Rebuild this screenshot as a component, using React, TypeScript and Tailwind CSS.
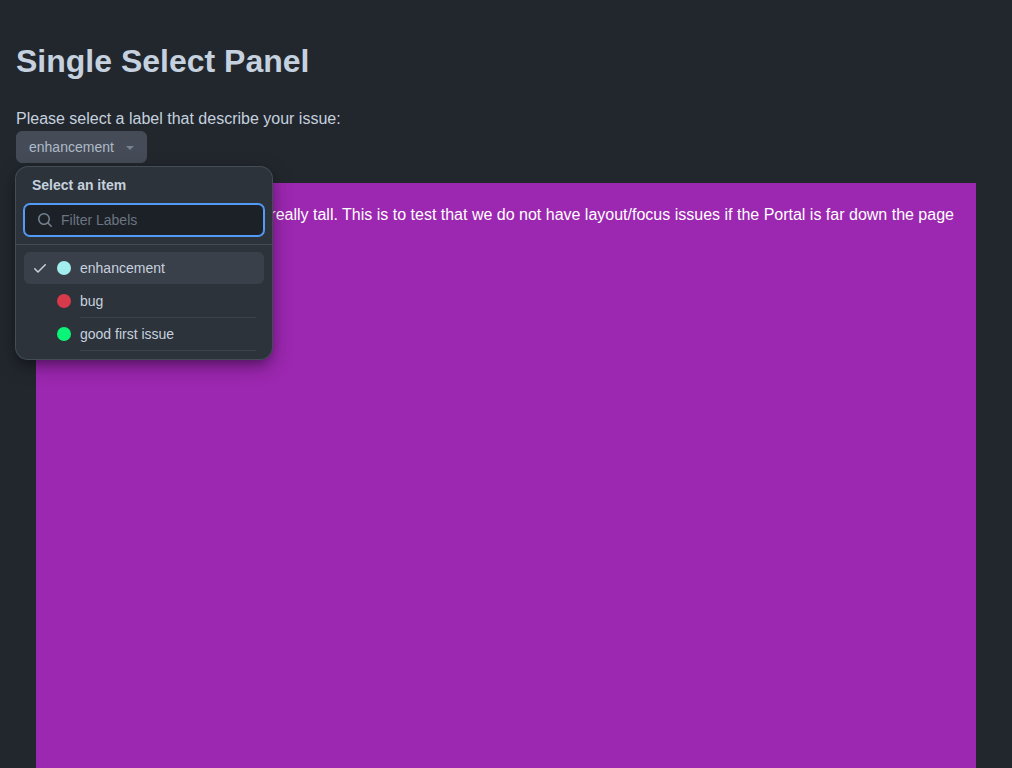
import { useState } from "react";
import { clsx } from "clsx";

type Label = { text: string; dot: string };

const labels: Label[] = [
  { text: "enhancement", dot: "bg-[#a2eeef]" },
  { text: "bug", dot: "bg-[#d73a4a]" },
  { text: "good first issue", dot: "bg-[#0cf478]" },
];

function CheckIcon() {
  return (
    <svg viewBox="0 0 16 16" className="size-4" fill="currentColor" aria-hidden="true">
      <path d="M13.78 4.22a.75.75 0 0 1 0 1.06l-7.25 7.25a.75.75 0 0 1-1.06 0L2.22 9.28a.751.751 0 0 1 .018-1.042.751.751 0 0 1 1.042-.018L6 10.94l6.72-6.72a.75.75 0 0 1 1.06 0Z" />
    </svg>
  );
}

function SearchIcon() {
  return (
    <svg viewBox="0 0 16 16" className="size-4 shrink-0" fill="currentColor" aria-hidden="true">
      <path d="M10.68 11.74a6 6 0 0 1-7.922-8.982 6 6 0 0 1 8.982 7.922l3.04 3.04a.749.749 0 0 1-.326 1.275.749.749 0 0 1-.734-.215ZM11.5 7a4.499 4.499 0 1 0-8.997 0A4.499 4.499 0 0 0 11.5 7Z" />
    </svg>
  );
}

function TriangleDownIcon() {
  return (
    <svg viewBox="0 0 16 16" className="size-4" fill="currentColor" aria-hidden="true">
      <path d="m4.427 7.427 3.396 3.396a.25.25 0 0 0 .354 0l3.396-3.396A.25.25 0 0 0 11.396 7H4.604a.25.25 0 0 0-.177.427Z" />
    </svg>
  );
}

export default function App() {
  const [open, setOpen] = useState(true);
  const [selected, setSelected] = useState("enhancement");
  const [filter, setFilter] = useState("");
  const visible = labels.filter((l) => l.text.toLowerCase().startsWith(filter.toLowerCase()));

  return (
    <main className="min-h-screen bg-[#22272e] p-4 font-['Liberation_Sans',Arial,sans-serif] text-base text-[#c5d1de]">
      <h1 className="my-5 text-[32px] leading-[50px] font-bold">Single Select Panel</h1>
      <div className="pt-px leading-6">Please select a label that describe your issue:</div>
      <div className="relative w-fit">
        <button
          type="button"
          aria-haspopup="listbox"
          aria-expanded={open}
          onClick={() => setOpen(!open)}
          className="flex h-8 items-center gap-2 rounded-md border border-[#464c57] bg-[#464c57] pr-2 pl-3 text-sm leading-5 text-[#adbac7]"
        >
          {selected}
          <span className="text-[#768390]">
            <TriangleDownIcon />
          </span>
        </button>
        {open && (
          <section
            aria-labelledby="panel-title"
            className="absolute top-full left-0 z-10 mt-1 w-64 rounded-xl bg-[#2d333b] text-sm leading-5 shadow-[0_0_0_1px_#444c56,0_6px_12px_-3px_rgba(1,4,9,0.3),0_6px_20px_0_rgba(1,4,9,0.35)]"
          >
            <div className="border-b border-[#444c56] px-2 pt-2 pb-2">
              <h2 id="panel-title" className="px-2 font-bold">
                Select an item
              </h2>
              <label className="mt-[9px] flex h-8 items-center rounded-md border border-[#539bf5] bg-[#1c2128] px-3 text-[#768390] ring-1 ring-[#539bf5]">
                <SearchIcon />
                <input
                  type="text"
                  aria-label="Filter items"
                  placeholder="Filter Labels"
                  value={filter}
                  onChange={(e) => setFilter(e.target.value)}
                  className="ml-2 min-w-0 flex-1 bg-transparent text-[#c5d1de] outline-none placeholder:text-[#6b7581]"
                />
              </label>
            </div>
            <div role="listbox" aria-label="Labels" className="flex flex-col gap-px px-2 pt-[7px] pb-[9px]">
              {visible.map((label) => {
                const active = label.text === selected;
                return (
                  <button
                    key={label.text}
                    type="button"
                    role="option"
                    aria-selected={active}
                    onClick={() => setSelected(label.text)}
                    className={clsx("flex h-8 gap-2 rounded-md px-2 text-left", active && "bg-[#3a404a]")}
                  >
                    <span className="flex h-8 w-4 items-center">{active && <CheckIcon />}</span>
                    <span className="flex h-8 w-4 items-center justify-center">
                      <span className={clsx("size-[14px] rounded-full", label.dot)} />
                    </span>
                    <span
                      className={clsx(
                        "h-[33px] flex-1 border-b py-[6px]",
                        active ? "border-transparent" : "border-[#3c434c]",
                      )}
                    >
                      {label.text}
                    </span>
                  </button>
                );
              })}
            </div>
          </section>
        )}
      </div>
      <div className="m-5 h-[1200px] bg-[#9c27b0] p-5 leading-6 text-white">
        This element makes the page really tall. This is to test that we do not have layout/focus issues if the Portal
        is far down the page
      </div>
    </main>
  );
}
